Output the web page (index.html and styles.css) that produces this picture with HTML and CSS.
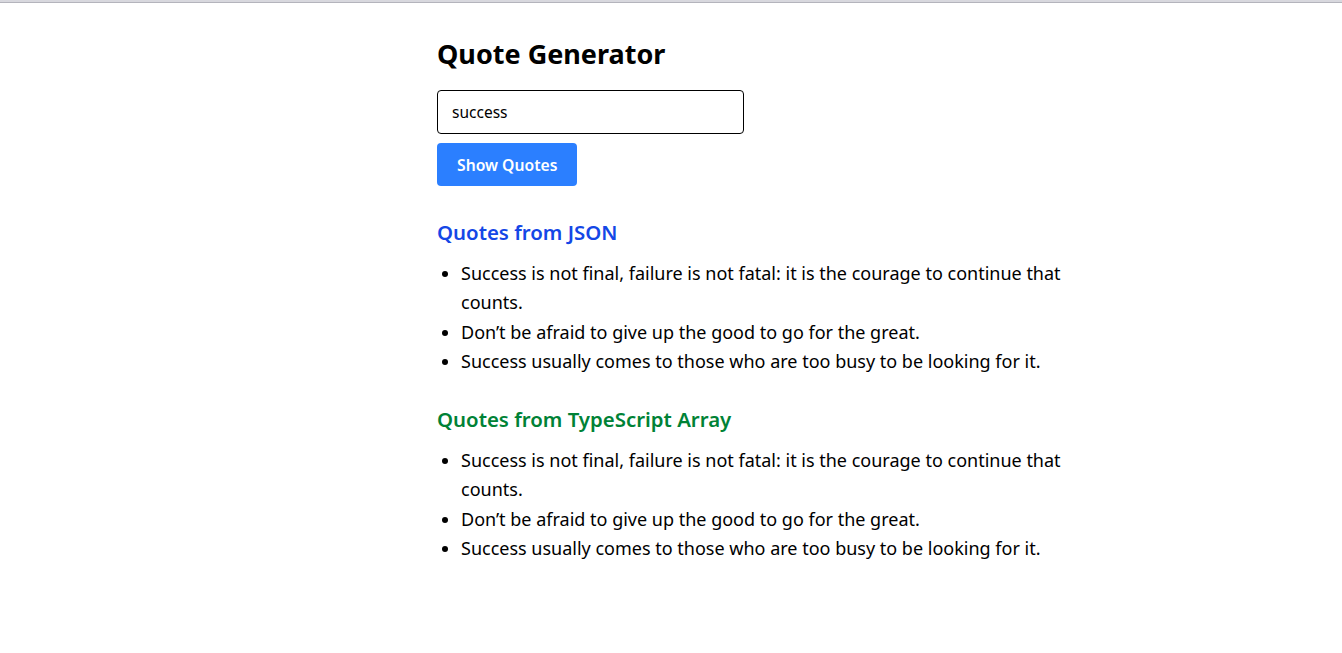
FILE: index.html
```html
<!DOCTYPE html>
<html lang="en">
<head>
<meta charset="utf-8">
<title>Quote Generator</title>
<link rel="stylesheet" href="styles.css">
</head>
<body>
<div class="topline"></div>
<main class="container">
  <h1 class="title">Quote Generator</h1>
  <input class="search" type="text" value="success">
  <button class="btn">Show Quotes</button>

  <section class="group">
    <h2 class="group-title json">Quotes from JSON</h2>
    <ul class="quotes">
      <li>Success is not final, failure is not fatal: it is the courage to continue that counts.</li>
      <li>Don’t be afraid to give up the good to go for the great.</li>
      <li>Success usually comes to those who are too busy to be looking for it.</li>
    </ul>
  </section>

  <section class="group">
    <h2 class="group-title ts">Quotes from TypeScript Array</h2>
    <ul class="quotes">
      <li>Success is not final, failure is not fatal: it is the courage to continue that counts.</li>
      <li>Don’t be afraid to give up the good to go for the great.</li>
      <li>Success usually comes to those who are too busy to be looking for it.</li>
    </ul>
  </section>
</main>
</body>
</html>
```
FILE: styles.css
```css
* { box-sizing: border-box; }
html, body { margin: 0; padding: 0; background: #fff; }
body { font-family: "Noto Sans", "Open Sans", sans-serif; color: #000; }

.topline {
  height: 3px;
  background: #d8d8de;
  border-bottom: 1px solid #b4b4bc;
}

.container {
  margin-left: 437px;
  width: 640px;
  padding-top: 33px;
  display: flex;
  flex-direction: column;
  align-items: flex-start;
}

.title {
  margin: 0;
  font-size: 27px;
  line-height: 36px;
  font-weight: 700;
}

.search {
  margin-top: 18px;
  width: 307px;
  height: 44px;
  padding: 0 14px;
  border: 1px solid #000;
  border-radius: 4px;
  font-family: inherit;
  font-size: 15.5px;
  color: #000;
  outline: none;
}

.btn {
  margin-top: 9px;
  height: 43px;
  padding: 0 20px;
  background: #2b7fff;
  color: #fff;
  border: 0;
  border-radius: 4px;
  font-family: inherit;
  font-size: 15.7px;
  font-weight: 600;
}

.group { width: 100%; }
.group:first-of-type { margin-top: 30px; }
.group + .group { margin-top: 27px; }

.group-title {
  margin: 0;
  font-size: 20.4px;
  line-height: 32px;
  font-weight: 600;
}
.json { color: #1447e6; }
.ts { color: #008236; }

.quotes {
  margin: 11px 0 0;
  padding-left: 24px;
  list-style: disc;
  font-size: 18px;
  line-height: 29.25px;
}
```
